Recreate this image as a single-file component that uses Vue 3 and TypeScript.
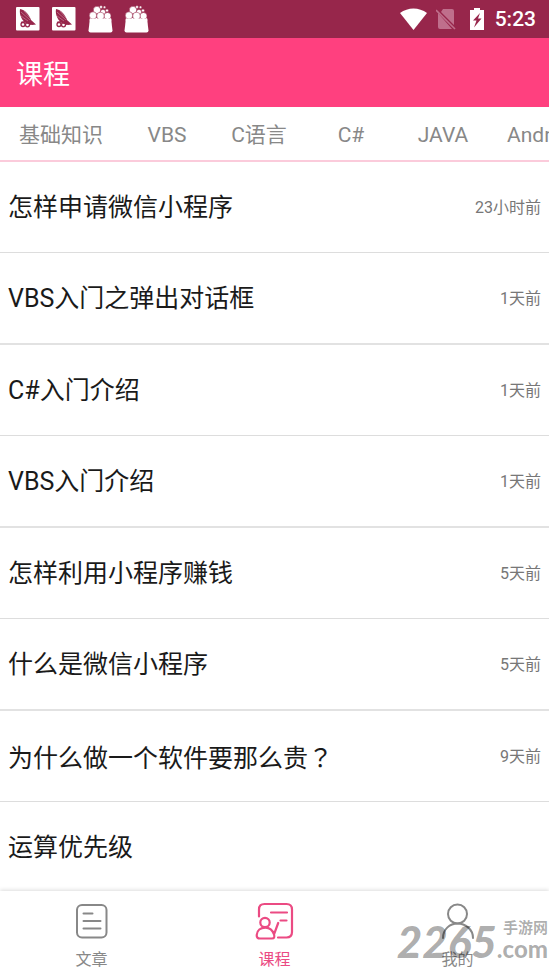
<script setup lang="ts">
import { ref } from 'vue'

interface Lesson {
  title: string
  mark?: string
  time: string
}

const categories: string[] = ['基础知识', 'VBS', 'C语言', 'C#', 'JAVA', 'Android']

const lessons: Lesson[] = [
  { title: '怎样申请微信小程序', time: '23小时前' },
  { title: 'VBS入门之弹出对话框', time: '1天前' },
  { title: 'C#入门介绍', time: '1天前' },
  { title: 'VBS入门介绍', time: '1天前' },
  { title: '怎样利用小程序赚钱', time: '5天前' },
  { title: '什么是微信小程序', time: '5天前' },
  { title: '为什么做一个软件要那么贵', mark: '？', time: '9天前' },
  { title: '运算优先级', time: '' },
]

const tabs = [
  { id: 'article', label: '文章' },
  { id: 'course', label: '课程' },
  { id: 'mine', label: '我的' },
]
const active = ref<string>('course')
</script>

<template>
  <div class="page">
    <div class="status">
      <div class="notices">
        <svg v-for="n in 2" :key="'b' + n" class="notice" viewBox="0 0 26 28">
          <rect x="1" y="2" width="23.500" height="23.500" rx="1" fill="#fff" />
          <path d="M5 4c5 1 9 5 11 11l5 4.500-4 .500-5-1.500C7 16 4 10 5 4z" fill="#97264b" />
          <path d="M6 7l9 8M6 11l7 5M9 6l6 7" stroke="#fff" stroke-width=".3" />
          <g fill="none" stroke="#97264b" stroke-width="1.300">
            <circle cx="8" cy="19.500" r="2" /><circle cx="12.500" cy="19.800" r="2" />
            <path d="M6 17.500l5-1 5 3" />
          </g>
        </svg>
        <svg v-for="n in 2" :key="'g' + n" class="notice" viewBox="0 0 26 28">
          <path d="M3 13h21l1.500 12.500q0 2-2 2h-20q-2 0-2-2z" fill="#fff" />
          <g fill="#fff" stroke="#97264b" stroke-width=".5">
            <circle cx="10" cy="5" r="3.700" /><circle cx="16" cy="7" r="2.600" />
            <circle cx="6" cy="10.500" r="3.700" /><circle cx="20.500" cy="11" r="3.500" />
            <circle cx="13.500" cy="11" r="3.800" />
            <circle cx="20" cy="5.500" r="1.500" /><circle cx="14" cy="2" r="1.500" />
            <circle cx="17.500" cy="2.200" r="1.200" />
          </g>
          <path d="M2.700 15h21.600" stroke="#fff" stroke-width="2.500" />
        </svg>
      </div>
      <div class="system">
        <svg class="wifi" viewBox="0 0 28 22"><path d="M0 5C8-1 19-1 27 5L13.500 22z" fill="#fff" /></svg>
        <svg class="sim" viewBox="0 0 20 22">
          <path d="M7 1h9q2 0 2 2v14L5 4zM2 5l14 16H4q-2 0-2-2z" fill="#bf6f8c" />
          <path d="M0 2l19 19" stroke="#bf6f8c" stroke-width="1.600" />
        </svg>
        <svg class="battery" viewBox="0 0 14 22">
          <path d="M4 0h6v2h4v20H0V2h4z" fill="#fff" />
          <path d="M10 5L3 12.500h3.500l-2.500 7 7.500-9H8z" fill="#97264b" />
        </svg>
        <span class="clock">5:23</span>
      </div>
    </div>

    <header class="header"><h1>课程</h1></header>

    <nav class="categories" aria-label="课程">
      <button v-for="c in categories" :key="c" type="button">{{ c }}</button>
    </nav>

    <main class="list">
      <a v-for="l in lessons" :key="l.title" href="#" class="lesson">
        <span class="title">{{ l.title }}<span v-if="l.mark" class="mark">{{ l.mark }}</span></span>
        <span class="time">{{ l.time }}</span>
      </a>
    </main>

    <nav class="tabbar">
      <button
        v-for="t in tabs"
        :key="t.id"
        type="button"
        :class="{ active: active === t.id }"
        @click="active = t.id"
      >
        <svg class="icon" viewBox="0 0 40 38" fill="none" stroke="currentColor" stroke-linecap="round">
          <g v-if="t.id === 'article'" stroke-width="2">
            <rect x="5" y="3" width="29.500" height="32.500" rx="5" />
            <path d="M11.500 11.500h9M11.500 19h17M11.500 26.500h17" />
          </g>
          <g v-else-if="t.id === 'course'" stroke-width="2.200">
            <path d="M4 14.500V7.500Q4 2 9.500 2h22Q37 2 37 7.500V30q0 5.500-5.500 5.500H23M16 10.500h16M25.500 18.500h6" />
            <circle cx="10" cy="20.500" r="4.700" />
            <path d="M5 36.500q-3.500 0-3.300-3.500C2 28.500 5.500 25.700 10.500 25.700c4 0 7 2.300 8.500 6.800L23.200 21M19 32.500q1.300 4-2 4H5" />
          </g>
          <g v-else stroke-width="2">
            <circle cx="19.500" cy="12" r="9.500" />
            <path d="M5 36c0-9 7-14.500 14.500-14.500S35 27 35 36" />
          </g>
        </svg>
        <span>{{ t.label }}</span>
      </button>
      <div class="watermark">
        <span class="number">2265</span>
        <span class="site"><span class="cn">手游网</span><span class="com">.com</span></span>
      </div>
    </nav>
  </div>
</template>

<style>
body {
  margin: 0;
  background: #fff;
}
</style>

<style scoped>
.page {
  display: flex;
  flex-direction: column;
  height: 100vh;
  overflow: hidden;
  background: #fff;
  font-family: Roboto, 'Noto Sans CJK SC', sans-serif;
}
button {
  border: 0;
  background: none;
  font-family: inherit;
  cursor: pointer;
}
.status {
  display: flex;
  flex: none;
  align-items: center;
  justify-content: space-between;
  height: 38px;
  padding: 0 13px 0 15px;
  background: #97264b;
}
.notices,
.system {
  display: flex;
  align-items: center;
}
.notices {
  gap: 10px;
}
.notice {
  width: 26px;
  height: 28px;
}
.wifi {
  width: 28px;
  height: 22px;
}
.sim {
  width: 20px;
  height: 22px;
  margin-left: 8px;
}
.battery {
  width: 14px;
  height: 22px;
  margin-left: 14px;
}
.clock {
  margin-left: 11px;
  color: #fff;
  font-size: 21px;
  font-weight: 500;
  line-height: 24px;
}
.header {
  display: flex;
  box-sizing: border-box;
  flex: none;
  align-items: center;
  height: 69px;
  padding: 4px 16px 0;
  background: #ff407f;
}
.header h1 {
  margin: 0;
  color: #fff;
  font-size: 27px;
  font-weight: 400;
  line-height: 40px;
}
.categories {
  display: flex;
  flex: none;
  height: 53px;
  padding-left: 1px;
  overflow: hidden;
  border-bottom: 2px solid #fbcbdb;
}
.categories button {
  flex: none;
  min-width: 92px;
  padding: 2px 18px 0;
  color: #888;
  font-size: 21px;
  line-height: 32px;
}
.list {
  flex: 1;
  min-height: 0;
  overflow: hidden;
}
.lesson {
  display: flex;
  box-sizing: border-box;
  align-items: center;
  justify-content: space-between;
  height: 91px;
  padding: 2px 8px 0;
  border-bottom: 1px solid #ddd;
  color: #1a1a1a;
  text-decoration: none;
}
.lesson:nth-child(even) {
  height: 92px;
  border-bottom-width: 2px;
  border-bottom-color: #e2e2e2;
}
.title {
  font-size: 25px;
  line-height: 36px;
}
.mark {
  font-family: 'Noto Sans CJK TC', sans-serif;
}
.time {
  color: #777;
  font-size: 16px;
  line-height: 24px;
}
.tabbar {
  position: relative;
  display: flex;
  flex: none;
  height: 85px;
  background: #fff;
  box-shadow: 0 -1px 4px rgba(0, 0, 0, 0.14);
}
.tabbar button {
  display: flex;
  flex: 1;
  flex-direction: column;
  align-items: center;
  gap: 8px;
  padding: 11px 0 0;
  color: #888;
  font-size: 16px;
  line-height: 24px;
}
.tabbar button.active {
  color: #eb4b83;
}
.icon {
  width: 40px;
  height: 38px;
}
.watermark {
  position: absolute;
  right: 1px;
  bottom: 13px;
  display: flex;
  align-items: flex-end;
  color: rgba(0, 0, 0, 0.32);
  font-family: Lato, 'Noto Sans CJK SC', sans-serif;
  font-weight: 900;
  pointer-events: none;
}
.number {
  font-size: 44px;
  font-style: italic;
  line-height: 44px;
}
.site {
  display: flex;
  flex-direction: column;
  align-items: flex-end;
}
.cn {
  font-size: 15px;
  font-weight: 700;
  line-height: 16px;
}
.com {
  font-size: 24px;
  line-height: 28px;
}
</style>
